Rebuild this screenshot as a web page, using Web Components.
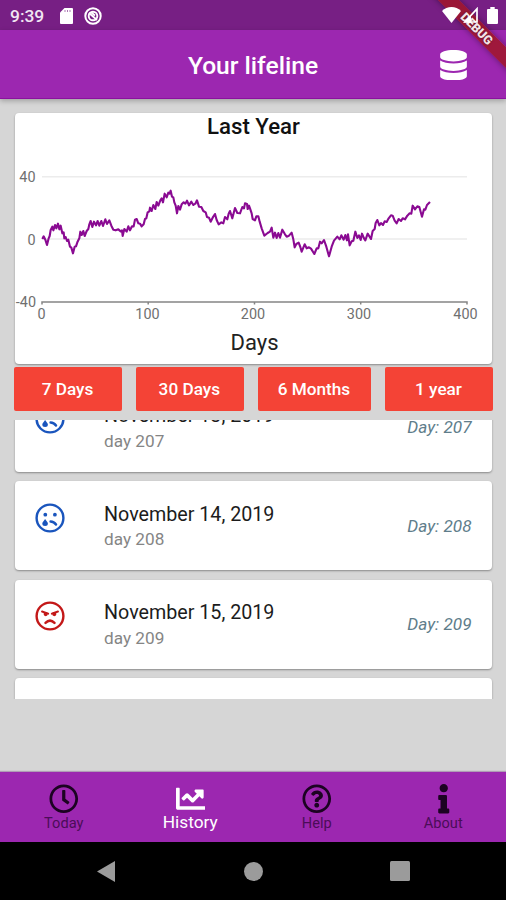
<!DOCTYPE html>
<html lang="en">
<head>
<meta charset="utf-8">
<title>Your lifeline</title>
<style>
  :root {
    --color-primary: #9c27b0;
    --color-primary-dark: #771f84;
    --color-danger: #f44336;
    --color-background: #d6d6d6;
    --card-shadow: 0 1px 2px rgba(0, 0, 0, .36);
  }
  body {
    margin: 0;
    font-family: Roboto, "Liberation Sans", sans-serif;
    background: var(--color-background);
  }
</style>
</head>
<body>
<life-app></life-app>

<script>
const ICONS = {
  database: ["0 0 448 512", `<path d="M448 73.143v45.714C448 159.143 347.667 192 224 192S0 159.143 0 118.857V73.143C0 32.857 100.333 0 224 0s224 32.857 224 73.143zM448 176v102.857C448 319.143 347.667 352 224 352S0 319.143 0 278.857V176c48.125 33.143 136.208 48.572 224 48.572S399.874 209.143 448 176zm0 160v102.857C448 479.143 347.667 512 224 512S0 479.143 0 438.857V336c48.125 33.143 136.208 48.572 224 48.572S399.874 369.143 448 336z"/>`],
  clock: ["0 0 512 512", `<path d="M256 8C119 8 8 119 8 256s111 248 248 248 248-111 248-248S393 8 256 8zm0 448c-110.500 0-200-89.500-200-200S145.500 56 256 56s200 89.500 200 200-89.500 200-200 200zm61.800-104.400l-84.900-61.700c-3.100-2.300-4.900-5.900-4.900-9.700V116c0-6.600 5.400-12 12-12h32c6.600 0 12 5.400 12 12v141.700l66.800 48.600c5.400 3.900 6.500 11.400 2.600 16.800L334.600 349c-3.900 5.300-11.400 6.500-16.800 2.600z"/>`],
  chart: ["0 0 512 512", `<path d="M496 384H64V80c0-8.840-7.160-16-16-16H16C7.160 64 0 71.160 0 80v336c0 17.670 14.330 32 32 32h464c8.840 0 16-7.160 16-16v-32c0-8.840-7.160-16-16-16zM464 96H345.940c-21.380 0-32.090 25.850-16.970 40.970l32.400 32.400L288 242.750l-73.370-73.370c-12.500-12.500-32.760-12.500-45.250 0l-68.690 68.690c-6.250 6.250-6.250 16.380 0 22.630l22.620 22.620c6.250 6.250 16.380 6.250 22.630 0L192 237.250l73.370 73.370c12.500 12.500 32.760 12.500 45.250 0l96-96 32.400 32.400c15.120 15.120 40.970 4.410 40.970-16.970V112c.010-8.840-7.150-16-15.990-16z"/>`],
  help: ["0 0 512 512", `<path d="M256 8C119.043 8 8 119.083 8 256c0 136.997 111.043 248 248 248s248-111.003 248-248C504 119.083 392.957 8 256 8zm0 448c-110.532 0-200-89.431-200-200 0-110.495 89.472-200 200-200 110.491 0 200 89.471 200 200 0 110.530-89.431 200-200 200zm107.244-255.200c0 67.052-72.421 68.084-72.421 92.863V300c0 6.627-5.373 12-12 12h-45.647c-6.627 0-12-5.373-12-12v-8.659c0-35.745 27.100-50.034 47.579-61.516 17.561-9.845 28.324-16.541 28.324-29.579 0-17.246-21.999-28.693-39.784-28.693-23.189 0-33.894 10.977-48.942 29.969-4.057 5.120-11.460 6.071-16.666 2.124l-27.824-21.098c-5.107-3.872-6.251-11.066-2.644-16.363C184.846 131.491 214.940 112 261.794 112c49.071 0 101.450 38.304 101.450 88.800zM298 368c0 23.159-18.841 42-42 42s-42-18.841-42-42 18.841-42 42-42 42 18.841 42 42z"/>`],
  info: ["0 0 192 512", `<path d="M20 424.229h20V279.771H20c-11.046 0-20-8.954-20-20V212c0-11.046 8.954-20 20-20h112c11.046 0 20 8.954 20 20v212.229h20c11.046 0 20 8.954 20 20V492c0 11.046-8.954 20-20 20H20c-11.046 0-20-8.954-20-20v-47.771c0-11.046 8.954-20 20-20zM96 0C56.235 0 24 32.235 24 72s32.235 72 72 72 72-32.235 72-72S135.764 0 96 0z"/>`],
  sad: ["-15 -15 30 30", `
    <circle r="13.400" fill="none" stroke="currentColor" stroke-width="2.400"/>
    <circle cx="-4.700" cy="-3.300" r="1.900"/><circle cx="4.900" cy="-3.300" r="1.900"/>
    <path d="M-4.900 1C-6 2.800-7.700 4.200-7.700 5.500a2.800 2.500 0 0 0 5.600 0C-2.100 4.200-3.800 2.800-4.900 1z"/>
    <path d="M.6 3.600Q4 3.700 6 6.500" fill="none" stroke="currentColor" stroke-width="2.500" stroke-linecap="round"/>`],
  angry: ["-15 -15 30 30", `
    <circle r="13.400" fill="none" stroke="currentColor" stroke-width="2.400"/>
    <circle cx="-4.300" cy="-1.900" r="2.100"/><circle cx="4.300" cy="-1.900" r="2.100"/>
    <path d="M-8-4.500l6.200 2.200M8-4.500l-6.200 2.200" stroke="currentColor" stroke-width="1.900" stroke-linecap="round"/>
    <path d="M-4.500 6.900Q0 2.400 4.500 6.900" fill="none" stroke="currentColor" stroke-width="2.500" stroke-linecap="round"/>`],
  sdcard: ["0 0 13 16", `<path d="M4.500 0H12a1 1 0 0 1 1 1v14a1 1 0 0 1-1 1H1a1 1 0 0 1-1-1V4.500z"/><path d="M5 2v2M7.500 2v2M10 2v2" stroke="#771f84" stroke-width="1" opacity=".6"/>`],
  sync: ["-9 -9 18 18", `
    <circle r="7.700" fill="none" stroke="currentColor" stroke-width="2"/>
    <circle r="4.300" fill="none" stroke="currentColor" stroke-width="1.900"/>
    <path d="M-4-3L4 4M-1.500-3.500L2-.5" stroke="currentColor" stroke-width="1.700"/>`],
  wifi: ["0 0 19 16", `<path d="M9.500 16L0 4C5-1.200 14-1.200 19 4z"/>`],
  signal: ["0 0 15 16", `<path d="M14 1.800V15H1.800z" fill="none" stroke="currentColor" stroke-width="1.700"/><path d="M1 15.500l7-7.500v7.500z"/>`],
  battery: ["0 0 11 17", `<path d="M3.300 0h4.400v2H10a1 1 0 0 1 1 1v13a1 1 0 0 1-1 1H1a1 1 0 0 1-1-1V3a1 1 0 0 1 1-1h2.300z"/>`],
  back: ["0 0 18 21", `<path d="M18 0v21L0 10.500z"/>`],
  home: ["0 0 19 19", `<circle cx="9.500" cy="9.500" r="9.500"/>`],
  recents: ["0 0 20 20", `<rect width="20" height="20" rx="1.500"/>`]
}

class LifeIcon extends HTMLElement {
  constructor() {
    super()
    this.attachShadow({mode: "open"})
  }

  connectedCallback() {
    const [viewBox, shape] = ICONS[this.getAttribute("name")]
    this.shadowRoot.innerHTML = `
      <style>
        :host { display: block; flex: none; }
        svg { display: block; width: 100%; height: 100%; fill: currentColor; }
      </style>
      <svg viewBox="${viewBox}">${shape}</svg>
    `
  }
}

class StatusBar extends HTMLElement {
  constructor() {
    super()
    this.attachShadow({mode: "open"})
    this.shadowRoot.innerHTML = `
      <style>
        :host {
          display: flex;
          align-items: center;
          box-sizing: border-box;
          height: 30px;
          padding: 1px 8px 0 10px;
          color: #fff;
          background: var(--color-primary-dark);
        }
        .time { font-size: 17.4px; font-weight: 500; color: #f1e6f3; width: 50px; }
        .sdcard { width: 13px; height: 16px; margin-right: 11px; }
        .sync { width: 18px; height: 18px; }
        /* the system icons stay above the ribbon */
        .wifi { width: 19px; height: 16px; margin-left: auto; margin-top: -2px; z-index: 3; }
        .signal { width: 15px; height: 16px; margin: -1px 9px 0 2px; z-index: 3; }
        .battery { width: 11px; height: 17px; margin-top: -1px; }
      </style>
      <span class="time">9:39</span>
      <life-icon class="sdcard" name="sdcard"></life-icon>
      <life-icon class="sync" name="sync"></life-icon>
      <life-icon class="wifi" name="wifi"></life-icon>
      <life-icon class="signal" name="signal"></life-icon>
      <life-icon class="battery" name="battery"></life-icon>
    `
  }
}

class AppHeader extends HTMLElement {
  constructor() {
    super()
    this.attachShadow({mode: "open"})
    this.shadowRoot.innerHTML = `
      <style>
        :host {
          display: grid;
          grid-template-columns: 1fr auto 1fr;
          align-items: center;
          box-sizing: border-box;
          height: 69px;
          padding: 2px 39px 0 39px;
          color: #fff;
          background: var(--color-primary);
          border-bottom: 1px solid #8b119f;
          box-shadow: 0 2px 5px rgba(0, 0, 0, .25);
        }
        h1 { grid-column: 2; margin: 0; font-size: 24.6px; font-weight: 500; }
        life-icon { justify-self: end; width: 27px; height: 30.500px; }
      </style>
      <h1><slot></slot></h1>
      <life-icon name="database"></life-icon>
    `
  }
}

class DebugBanner extends HTMLElement {
  constructor() {
    super()
    this.attachShadow({mode: "open"})
    this.shadowRoot.innerHTML = `
      <style>
        /* Ribbon over the top right corner */
        :host {
          position: absolute;
          top: 0;
          right: 0;
          width: 80px;
          height: 80px;
          overflow: hidden;
          z-index: 2;
        }
        div {
          position: absolute;
          left: -8.750px;
          top: 21.350px;
          width: 120px;
          height: 14.800px;
          line-height: 15px;
          text-align: center;
          font-size: 12.4px;
          font-weight: 900;
          color: #f4e3e8;
          background: rgba(160, 22, 40, .85);
          box-shadow: 0 0 6px rgba(0, 0, 0, .4);
          text-shadow: 0 0 2px rgba(0, 0, 0, .5);
          transform: rotate(45deg);
        }
      </style>
      <div>DEBUG</div>
    `
  }
}

class LifeChart extends HTMLElement {
  constructor() {
    super()
    this.attachShadow({mode: "open"})
    this.shadowRoot.innerHTML = `
      <style>
        :host {
          display: block;
          height: 251px;
          background: #fff;
          border-radius: 4px;
          box-shadow: var(--card-shadow);
        }
        svg { display: block; width: 477px; height: 251px; }
        text { text-anchor: middle; }
        .title { font-size: 22.2px; font-weight: 500; fill: #111; }
        .caption { font-size: 22px; fill: #222; }
        .tick { font-size: 14.4px; fill: #6f6f6f; }
        .tick-y { text-anchor: end; }
        .grid { stroke: #ececec; stroke-width: 1.5; }
        .axis { stroke: #858585; stroke-width: 1.5; fill: none; }
        .line { stroke: #8a0a92; stroke-width: 6.3; fill: none; stroke-linejoin: round; }
      </style>
      <svg viewBox="15 113 477 251">
        <text class="title" x="253.500" y="134">Last Year</text>
        <path class="grid" d="M42 176.700H467M42 239H467"/>
        <path class="axis" d="M42 304.500V302H467V304.500M148.200 302v2.500M254.500 302v2.500M360.700 302v2.500"/>
        <text class="tick tick-y" x="35.500" y="181.500">40</text>
        <text class="tick tick-y" x="35.500" y="244.500">0</text>
        <text class="tick tick-y" x="36" y="307">-40</text>
        <text class="tick" x="41.500" y="319">0</text>
        <text class="tick" x="147.500" y="319">100</text>
        <text class="tick" x="253" y="319">200</text>
        <text class="tick" x="359" y="319">300</text>
        <text class="tick" x="465.500" y="319">400</text>
        <!-- the series is plotted at three units per pixel -->
        <g transform="translate(0 105) scale(.33333)">
          <polyline class="line" points="127,402 131,394 136,404 141,420 146,400 149,393 152,375 157,365 160,376 165,360 169,370 174,356 178,373 182,362 187,385 191,382 193,400 197,396 201,408 205,404 210,425 214,428 219,445 224,425 228,424 232,412 238,400 241,380 245,390 250,378 254,393 260,378 265,372 268,358 272,348 277,366 282,350 288,361 293,348 298,362 304,348 309,363 316,343 321,357 328,346 334,362 340,374 347,376 355,373 362,379 366,376 368,393 373,372 380,380 385,364 390,376 396,364 401,364 405,344 410,342 415,355 420,356 425,364 431,358 435,342 439,340 443,322 448,319 450,308 455,318 460,300 466,312 470,291 475,302 481,286 485,280 489,292 494,266 500,277 505,263 509,266 512,257 516,275 520,277 523,292 527,302 531,325 535,303 540,314 545,298 551,292 556,296 561,287 567,301 574,290 580,300 586,296 591,286 597,305 604,306 610,318 617,322 621,336 627,338 632,350 638,338 645,327 650,345 656,358 664,352 670,355 675,336 682,343 686,326 690,318 697,340 705,309 712,324 720,325 727,306 732,310 735,295 741,297 743,312 747,302 750,310 755,325 758,342 765,346 769,334 775,334 779,350 785,370 793,392 803,384 810,380 815,368 820,398 825,383 830,399 835,384 840,398 847,374 855,388 860,395 867,392 875,383 880,403 884,427 889,417 896,413 901,426 905,440 914,418 920,430 927,427 933,431 943,447 950,430 955,430 960,410 965,415 972,405 979,425 987,454 995,425 1002,407 1012,395 1019,403 1024,391 1031,404 1036,390 1041,406 1044,388 1049,421 1055,409 1060,407 1066,380 1072,399 1077,391 1082,405 1086,386 1092,400 1096,406 1103,386 1113,402 1118,378 1124,372 1127,354 1132,345 1138,361 1143,354 1149,360 1154,349 1160,351 1166,340 1173,331 1178,332 1184,347 1190,355 1196,342 1203,348 1208,340 1215,343 1222,332 1229,325 1234,326 1238,302 1245,313 1252,304 1258,306 1266,335 1272,313 1276,314 1281,300 1290,291"/>
        </g>
        <text class="caption" x="254.500" y="350">Days</text>
      </svg>
    `
  }
}

class RangeButton extends HTMLElement {
  constructor() {
    super()
    this.attachShadow({mode: "open"})
    this.shadowRoot.innerHTML = `
      <style>
        :host { display: block; flex: none; width: 108px; }
        :host([wide]) { width: 113.500px; }
        button {
          display: block;
          width: 100%;
          height: 44px;
          padding: 0 1px 0 0;
          border: none;
          border-radius: 2px;
          font: 500 17.2px Roboto, "Liberation Sans", sans-serif;
          color: #fff;
          background: var(--color-danger);
        }
      </style>
      <button><slot></slot></button>
    `
  }
}

class DayEntry extends HTMLElement {
  constructor() {
    super()
    this.attachShadow({mode: "open"})
  }

  connectedCallback() {
    const day = this.getAttribute("day")
    const mood = this.getAttribute("mood")
    this.shadowRoot.innerHTML = `
      <style>
        :host {
          display: flex;
          flex: none;
          box-sizing: border-box;
          height: 89px;
          padding: 0 20.500px 0 19.500px;
          background: #fff;
          border-radius: 4px;
          box-shadow: var(--card-shadow);
        }
        life-icon { width: 30px; height: 30px; margin-top: 21.500px; }
        .sad { color: #1a55bd; }
        .angry { color: #c31818; }
        .text { flex: 1; margin: 21.500px 0 0 39.500px; }
        .date { font-size: 19.7px; line-height: 24px; color: #1c1c1c; }
        .note { font-size: 17.2px; line-height: 20px; margin-top: 2.500px; color: #858585; }
        .day { align-self: center; font-size: 17.2px; font-style: italic; color: #607d8b; }
      </style>
    `
    if (!day) return
    this.shadowRoot.innerHTML += `
      <life-icon class="${mood}" name="${mood}"></life-icon>
      <div class="text">
        <div class="date"><slot></slot></div>
        <div class="note">day ${day}</div>
      </div>
      <div class="day">Day: ${day}</div>
    `
  }
}

class DayList extends HTMLElement {
  constructor() {
    super()
    this.attachShadow({mode: "open"})
    this.shadowRoot.innerHTML = `
      <style>
        :host { display: block; height: 279px; padding: 0 14px 0 15px; overflow: hidden; }
        /* scrolled a little way into the first entry */
        div { display: flex; flex-direction: column; gap: 9.500px; margin-top: -37.500px; }
      </style>
      <div><slot></slot></div>
    `
  }
}

class NavItem extends HTMLElement {
  constructor() {
    super()
    this.attachShadow({mode: "open"})
  }

  connectedCallback() {
    this.shadowRoot.innerHTML = `
      <style>
        :host {
          display: flex;
          flex-direction: column;
          align-items: center;
          flex: 1;
          padding: 12px 0 0 1px;
          font-size: 14.6px;
          line-height: 18px;
          color: #4b0d58;
        }
        life-icon { width: 29.500px; height: 29.500px; color: #1c0322; }
        :host([active]) { color: #fff; font-size: 17.3px; }
        :host([active]) life-icon { color: #fff; margin-bottom: -1px; }
      </style>
      <life-icon name="${this.getAttribute("icon")}"></life-icon>
      <span><slot></slot></span>
    `
  }
}

class BottomNav extends HTMLElement {
  constructor() {
    super()
    this.attachShadow({mode: "open"})
    this.shadowRoot.innerHTML = `
      <style>
        :host {
          display: flex;
          height: 70px;
          background: var(--color-primary);
          box-shadow: 0 -1px 1px rgba(90, 20, 110, .3);
        }
      </style>
      <nav-item icon="clock">Today</nav-item>
      <nav-item icon="chart" active>History</nav-item>
      <nav-item icon="help">Help</nav-item>
      <nav-item icon="info">About</nav-item>
    `
  }
}

class SystemNav extends HTMLElement {
  constructor() {
    super()
    this.attachShadow({mode: "open"})
    this.shadowRoot.innerHTML = `
      <style>
        :host {
          display: flex;
          align-items: center;
          justify-content: space-between;
          box-sizing: border-box;
          height: 58px;
          padding: 0 96.500px 0 97px;
          color: #9b9b9b;
          background: #000;
        }
        .back { width: 18px; height: 21px; }
        .home { width: 19px; height: 19px; margin-left: 2px; }
        .recents { width: 20px; height: 20px; }
      </style>
      <life-icon class="back" name="back"></life-icon>
      <life-icon class="home" name="home"></life-icon>
      <life-icon class="recents" name="recents"></life-icon>
    `
  }
}

class LifeApp extends HTMLElement {
  constructor() {
    super()
    this.attachShadow({mode: "open"})
    this.shadowRoot.innerHTML = `
      <style>
        :host {
          display: flex;
          flex-direction: column;
          position: relative;
          width: 506px;
          height: 900px;
          overflow: hidden;
          background: var(--color-background);
        }
        status-bar, app-header, system-nav, bottom-nav { flex: none; }
        life-chart { flex: none; margin: 14px 14px 0 15px; }
        .ranges { display: flex; justify-content: space-between; padding: 3px 13px 9px 14px; }
        bottom-nav { margin-top: auto; }
      </style>
      <status-bar></status-bar>
      <app-header>Your lifeline</app-header>
      <life-chart></life-chart>
      <div class="ranges">
        <range-button>7 Days</range-button>
        <range-button>30 Days</range-button>
        <range-button wide>6 Months</range-button>
        <range-button>1 year</range-button>
      </div>
      <day-list>
        <day-entry day="207" mood="sad">November 13, 2019</day-entry>
        <day-entry day="208" mood="sad">November 14, 2019</day-entry>
        <day-entry day="209" mood="angry">November 15, 2019</day-entry>
        <day-entry></day-entry>
      </day-list>
      <bottom-nav></bottom-nav>
      <system-nav></system-nav>
      <debug-banner></debug-banner>
    `
  }
}

customElements.define("life-icon", LifeIcon)
customElements.define("status-bar", StatusBar)
customElements.define("app-header", AppHeader)
customElements.define("debug-banner", DebugBanner)
customElements.define("life-chart", LifeChart)
customElements.define("range-button", RangeButton)
customElements.define("day-entry", DayEntry)
customElements.define("day-list", DayList)
customElements.define("nav-item", NavItem)
customElements.define("bottom-nav", BottomNav)
customElements.define("system-nav", SystemNav)
customElements.define("life-app", LifeApp)
</script>
</body>
</html>
